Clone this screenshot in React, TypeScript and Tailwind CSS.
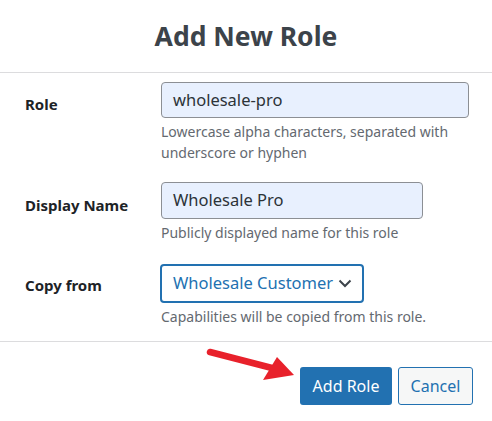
import React from 'react';

const labelCls = "w-[136px] shrink-0 text-[15px] leading-5 font-bold text-[#1d2327]";
const descCls = "mt-[3px] text-[14px] leading-[21px] text-[#646970]";

function Arrow() {
  return (
    <svg className="absolute left-0 top-0 pointer-events-none" width="492" height="421" viewBox="0 0 492 421">
      <line x1="210" y1="352" x2="272" y2="368" stroke="#e8212b" strokeWidth="6.5" strokeLinecap="round" />
      <polygon points="294,375 263,380 277,357" fill="#e8212b" />
    </svg>
  );
}

export default function App() {
  return (
    <div className="relative w-[492px] h-[421px] bg-white font-['Noto_Sans',sans-serif] text-[#2c3338]">
      <h2 className="h-[72px] pt-[2px] flex items-center justify-center text-[26.5px] font-bold text-[#3c434a]">
        Add New Role
      </h2>
      <div className="border-t border-[#dcdcde]" />

      <div className="pl-[25px] pt-[9px]">
        <div className="flex">
          <label className={`${labelCls} pt-[12px]`}>Role</label>
          <div>
            <div className="w-[308px] h-[36px] flex items-center pl-[11px] rounded-[4px] border border-[#8c8f94] bg-[#e8f0fe] text-[16.5px]">
              wholesale-pro
            </div>
            <p className={`${descCls} w-[290px]`}>Lowercase alpha characters, separated with underscore or hyphen</p>
          </div>
        </div>

        <div className="flex mt-[19px]">
          <label className={`${labelCls} pt-[13px]`}>Display Name</label>
          <div>
            <div className="w-[262px] h-[37px] flex items-center pl-[11px] rounded-[4px] border border-[#8c8f94] bg-[#e8f0fe] text-[16.5px]">
              Wholesale Pro
            </div>
            <p className={descCls}>Publicly displayed name for this role</p>
          </div>
        </div>

        <div className="flex mt-[21px]">
          <label className={`${labelCls} pt-[11px]`}>Copy from</label>
          <div className="-ml-px">
            <div className="w-[204px] h-[39px] flex items-center justify-between pl-[11px] pr-[10px] rounded-[4px] border-2 border-[#2271b1] bg-white text-[16.5px] text-[#2271b1]">
              <span>Wholesale Customer</span>
              <svg width="14" height="9" viewBox="0 0 14 9">
                <polyline points="1.5,1.5 7,7 12.5,1.5" fill="none" stroke="#3c434a" strokeWidth="2" />
              </svg>
            </div>
            <p className={`${descCls} ml-px`}>Capabilities will be copied from this role.</p>
          </div>
        </div>
      </div>

      <div className="mt-[14px] border-t border-[#dcdcde]" />

      <div className="flex justify-end gap-[6px] pt-[25px] pr-[19px]">
        <button className="w-[92px] h-[38px] rounded-[3px] bg-[#2271b1] text-white text-[16px]">Add Role</button>
        <button className="w-[75px] h-[38px] rounded-[3px] border border-[#2271b1] bg-[#f6f7f7] text-[#2271b1] text-[16px]">Cancel</button>
      </div>

      <Arrow />
    </div>
  );
}
